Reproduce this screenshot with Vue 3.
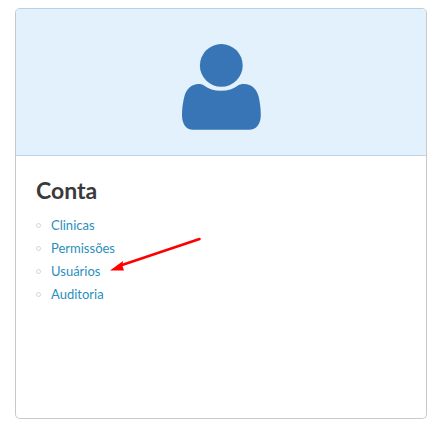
<template>
  <div class="page">
    <div class="card">
      <div class="card-head">
        <svg class="user-icon" width="80" height="87" viewBox="0 0 80 87">
          <circle cx="40.3" cy="21.4" r="21.4" fill="#3875b7" />
          <path
            d="M18 40 C20 40 21.500 40.500 23 41.500 C27.500 45 33 46.700 40 46.700 C47 46.700 52.500 45 57 41.500 C58.500 40.500 60 40 63 40 C71 40 75.500 45 77.500 52 C79 58 79.800 65 79.800 71 C79.800 80 75.500 85.700 68 85.700 L12 85.700 C5 85.700 1 80 1 71 C1 65 1.800 58 3.500 52 C5.500 45 10 40 18 40 Z"
            fill="#3875b7"
          />
        </svg>
      </div>
      <div class="card-body">
        <h3 class="title">Conta</h3>
        <ul class="links">
          <li v-for="item in links" :key="item"><a href="#">{{ item }}</a></li>
        </ul>
        <svg class="arrow" width="110" height="45" viewBox="0 0 110 45">
          <path d="M99.500 6 L22 32" stroke="#f00" stroke-width="2.600" stroke-linecap="round" fill="none" />
          <path d="M10 37.500 L23 28 L22.500 33 L24 37.500 Z" fill="#f00" />
        </svg>
      </div>
    </div>
  </div>
</template>

<script setup>
const links = ["Clinicas", "Permissões", "Usuários", "Auditoria"];
</script>

<style>
body {
  background: #fff;
}
</style>

<style scoped>
.page {
  padding: 8px 11px 8px 15px;
  font-family: Lato, "Liberation Sans", sans-serif;
}

.card {
  height: 411px;
  box-sizing: border-box;
  border: 1px solid #c9c9c9;
  border-top-color: #b5d3e7;
  border-radius: 5px;
  overflow: hidden;
}

.card-head {
  display: flex;
  justify-content: center;
  height: 147px;
  box-sizing: border-box;
  padding-top: 35px;
  margin: 0 -1px;
  background: #e2f1fb;
  border: 1px solid #b5d3e7;
  border-top: 0;
  border-bottom-color: #bad6e8;
}

.card-body {
  position: relative;
  padding: 21px 20px;
}

.title {
  margin: 0 0 11px;
  font-size: 23px;
  line-height: 26px;
  font-weight: 700;
  color: #3a3a3a;
}

.links {
  margin: 0;
  padding: 0;
  list-style: none;
  font-size: 13px;
  line-height: 23px;
}

.links li {
  position: relative;
  padding-left: 15px;
}

.links li::before {
  content: "";
  position: absolute;
  left: 0;
  top: 9px;
  width: 3px;
  height: 3px;
  border: 1px solid #d5d5d5;
  border-radius: 50%;
}

.links a {
  color: #2a8fbd;
  text-decoration: none;
}

.arrow {
  position: absolute;
  left: 84px;
  top: 77px;
}
</style>
